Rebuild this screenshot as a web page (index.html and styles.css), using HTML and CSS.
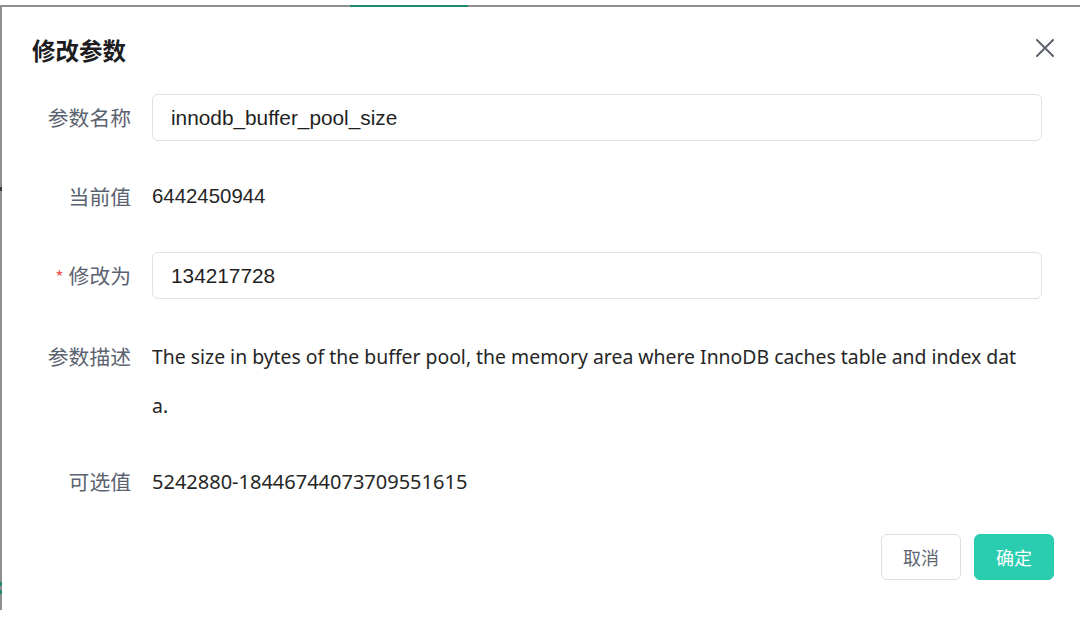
FILE: index.html
```html
<!DOCTYPE html>
<html lang="zh-CN">
<head>
<meta charset="utf-8">
<title>修改参数</title>
<link rel="stylesheet" href="styles.css">
</head>
<body>
<div class="page">
  <div class="frame">
    <span class="tab-indicator"></span>
    <span class="edge-mark edge-mark-a"></span>
    <span class="edge-mark edge-mark-b"></span>
    <span class="edge-mark edge-mark-c"></span>
    <div class="dialog">
      <div class="dialog-header">
        <h2 class="dialog-title">修改参数</h2>
        <button class="close-btn" aria-label="关闭">
          <svg width="20" height="20" viewBox="0 0 20 20"><path d="M2 2 L18 18 M18 2 L2 18" stroke="#5c626d" stroke-width="2" stroke-linecap="round" fill="none"/></svg>
        </button>
      </div>
      <div class="form">
        <div class="form-row">
          <label class="form-label">参数名称</label>
          <div class="form-control"><div class="input">innodb_buffer_pool_size</div></div>
        </div>
        <div class="form-row">
          <label class="form-label">当前值</label>
          <div class="form-control value value-arial">6442450944</div>
        </div>
        <div class="form-row">
          <label class="form-label"><span class="required">*</span>修改为</label>
          <div class="form-control"><div class="input">134217728</div></div>
        </div>
        <div class="form-row form-row-desc">
          <label class="form-label label-top">参数描述</label>
          <div class="form-control value desc">The size in bytes of the buffer pool, the memory area where InnoDB caches table and index dat<br>a.</div>
        </div>
        <div class="form-row form-row-last">
          <label class="form-label">可选值</label>
          <div class="form-control value">5242880-18446744073709551615</div>
        </div>
      </div>
      <div class="dialog-footer">
        <button class="btn btn-default">取消</button>
        <button class="btn btn-primary">确定</button>
      </div>
    </div>
  </div>
</div>
</body>
</html>
```
FILE: styles.css
```css
* { box-sizing: border-box; }
html, body {
  margin: 0;
  padding: 0;
  background: #ffffff;
}
body {
  width: 1080px;
  height: 618px;
  overflow: hidden;
  font-family: "Noto Sans", "Noto Sans CJK SC", sans-serif;
}
.page {
  padding-top: 5px;
}
.frame {
  position: relative;
  height: 605px;
  border-top: 2px solid #8f8f8f;
  border-left: 2px solid #8f8f8f;
  background: #ffffff;
}
.tab-indicator {
  position: absolute;
  top: -2px;
  left: 348px;
  width: 118px;
  height: 2px;
  background: #1f8a72;
}
.edge-mark {
  position: absolute;
  left: -2px;
  width: 2px;
  height: 4px;
}
.edge-mark-a { top: 180px; background: #3c3c3c; }
.edge-mark-b { top: 575px; background: #1f8a72; }
.edge-mark-c { top: 583px; background: #1f8a72; }

.dialog {
  padding: 28px 26px 0 30px;
}
.dialog-header {
  display: flex;
  align-items: center;
  justify-content: space-between;
  height: 30px;
}
.dialog-title {
  margin: 0;
  font-family: "Noto Sans CJK SC", sans-serif;
  font-size: 23.5px;
  font-weight: 700;
  line-height: 30px;
  color: #1d1d1f;
}
.close-btn {
  width: 20px;
  height: 20px;
  padding: 0;
  border: 0;
  background: transparent;
  display: flex;
  align-items: center;
  justify-content: center;
  margin-right: -1px;
  margin-top: -5px;
}

.form {
  margin-top: 29px;
  padding-right: 12px;
}
.form-row {
  display: grid;
  grid-template-columns: 99px 1fr;
  column-gap: 21px;
  margin-bottom: 32px;
}
.form-row-desc {
  margin-bottom: 28px;
}
.form-row-last {
  margin-bottom: 29px;
}
.form-label {
  text-align: right;
  font-family: "Noto Sans CJK SC", sans-serif;
  font-size: 20.8px;
  line-height: 47px;
  color: #5b6270;
  white-space: nowrap;
}
.label-top {
  line-height: 49px;
}
.required {
  color: #f0545a;
  margin-right: 5px;
  font-size: 18px;
}
.input {
  height: 47px;
  border: 1px solid #dfe1e6;
  border-radius: 6px;
  padding-left: 18px;
  font-family: "Liberation Sans", Arial, sans-serif;
  font-size: 20.8px;
  line-height: 45px;
  color: #1f1f1f;
}
.value {
  font-size: 20px;
  line-height: 47px;
  color: #262626;
}
.value-arial {
  font-family: "Liberation Sans", Arial, sans-serif;
  font-size: 20.4px;
}
.desc {
  font-size: 19.4px;
  line-height: 49px;
  white-space: nowrap;
}

.dialog-footer {
  display: flex;
  justify-content: flex-end;
  gap: 13px;
}
.btn {
  height: 46px;
  width: 80px;
  border-radius: 6px;
  font-family: "Noto Sans CJK SC", sans-serif;
  font-size: 18px;
  padding: 0;
}
.btn-default {
  background: #ffffff;
  border: 1px solid #dcdfe6;
  color: #606672;
}
.btn-primary {
  background: #2bcdb1;
  border: 1px solid #2bcdb1;
  color: #ffffff;
}
```
